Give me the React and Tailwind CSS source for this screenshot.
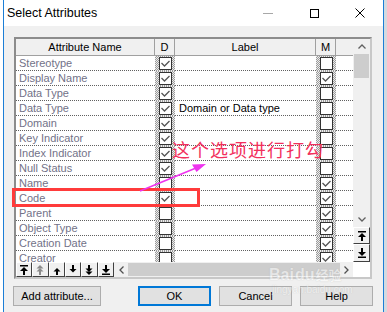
import React from "react";

const rows = [
  ["Stereotype", true, "", false],
  ["Display Name", true, "", true],
  ["Data Type", true, "", false],
  ["Data Type", true, "Domain or Data type", false],
  ["Domain", true, "", false],
  ["Key Indicator", true, "", false],
  ["Index Indicator", true, "", false],
  ["Null Status", true, "", false],
  ["Name", false, "", true],
  ["Code", true, "", true],
  ["Parent", false, "", true],
  ["Object Type", false, "", true],
  ["Creation Date", false, "", true],
  ["Creator", false, "", true],
];

function Check({ on }) {
  return (
    <div className="w-[13px] h-[13px] bg-white border border-[#333] flex items-center justify-center">
      {on && (
        <svg width="11" height="11" viewBox="0 0 11 11">
          <path d="M1.5 5 L4.5 8 L9.5 3" stroke="#555" strokeWidth="1.3" fill="none" />
        </svg>
      )}
    </div>
  );
}

function DotCell({ on }) {
  return (
    <div className="w-[20px] h-[15px] flex items-center justify-center bg-[repeating-conic-gradient(#9a9a9a_0_25%,#ececec_0_50%)] bg-size-[2px_2px]">
      <Check on={on} />
    </div>
  );
}

function ToolIcon({ kind }) {
  const c = kind === "up2" ? "#8a8a8a" : "#000";
  let body = null;
  if (kind === "top")
    body = (
      <>
        <rect x="1" y="0" width="8" height="1.5" fill={c} />
        <path d="M5 2 L1 6 L9 6 Z" fill={c} />
        <rect x="4" y="6" width="2" height="4" fill={c} />
      </>
    );
  if (kind === "up2")
    body = (
      <>
        <path d="M5 0 L1.5 3.5 L8.5 3.5 Z" fill={c} />
        <path d="M5 3 L1.5 6.5 L8.5 6.5 Z" fill={c} />
        <rect x="4" y="6" width="2" height="4" fill={c} />
      </>
    );
  if (kind === "up")
    body = (
      <>
        <path d="M5 3 L1.5 6.5 L8.5 6.5 Z" fill={c} />
        <rect x="4" y="6" width="2" height="4" fill={c} />
      </>
    );
  if (kind === "down")
    body = (
      <>
        <rect x="4" y="0" width="2" height="4" fill={c} />
        <path d="M5 7.5 L1.5 4 L8.5 4 Z" fill={c} />
      </>
    );
  if (kind === "down2")
    body = (
      <>
        <rect x="4" y="0" width="2" height="4" fill={c} />
        <path d="M5 7 L1.5 3.5 L8.5 3.5 Z" fill={c} />
        <path d="M5 10 L1.5 6.5 L8.5 6.5 Z" fill={c} />
      </>
    );
  if (kind === "bottom")
    body = (
      <>
        <rect x="4" y="0" width="2" height="4" fill={c} />
        <path d="M5 8 L1 4 L9 4 Z" fill={c} />
        <rect x="1" y="8.5" width="8" height="1.5" fill={c} />
      </>
    );
  return (
    <svg width="10" height="10" viewBox="0 0 10 10">
      {body}
    </svg>
  );
}

function ToolBtn({ kind }) {
  return (
    <div className="flex-1 h-[15px] bg-[#f0f0f0] border border-t-white border-l-white border-r-[#404040] border-b-[#404040] flex items-center justify-center">
      <ToolIcon kind={kind} />
    </div>
  );
}

function Btn({ children, w, focus, className = "" }) {
  return (
    <div
      className={
        "h-[20px] flex items-center justify-center text-[11px] text-black bg-[#e1e1e1] " +
        (focus ? "border-2 border-[#0078d7] " : "border border-[#adadad] ") +
        w +
        " " +
        className
      }
    >
      {children}
    </div>
  );
}

export default function App() {
  return (
    <div className="relative w-[387px] h-[312px] overflow-hidden bg-white flex font-['Liberation_Sans',Arial,sans-serif]">
      <div className="w-[3px] bg-white" />
      <div className="w-[381px] border-x border-[#1c7ed6] flex flex-col">
        {/* title bar */}
        <div className="h-[26px] bg-white flex items-center">
          <div className="pl-[3px] text-[12.5px] text-black">Select Attributes</div>
          <div className="flex-1" />
          <div className="w-[46px] h-[26px] flex items-center justify-center">
            <div className="w-[10px] h-px bg-[#a8a8a8]" />
          </div>
          <div className="w-[46px] h-[26px] flex items-center justify-center">
            <div className="w-[9px] h-[9px] border border-black" />
          </div>
          <div className="w-[46px] h-[26px] flex items-center justify-center">
            <svg width="10" height="10" viewBox="0 0 10 10">
              <path d="M0.5 0.5 L9.5 9.5 M9.5 0.5 L0.5 9.5" stroke="#000" strokeWidth="1" />
            </svg>
          </div>
        </div>

        {/* body */}
        <div className="flex-1 bg-[#f0f0f0] pt-[11px] pl-[9px] flex flex-col">
          {/* grid */}
          <div className="ml-[1px] w-[358px] h-[242px] border-2 border-t-[#8c8c8c] border-l-[#8c8c8c] border-r-[#c8c8c8] border-b-[#c8c8c8] bg-white flex flex-col text-[11px]">
            <div className="flex h-[223px]">
              <div className="w-[337px] flex flex-col">
                {/* header */}
                <div className="h-[17px] flex bg-[#f0f0f0] border-b border-[#a0a0a0] text-black">
                  <div className="w-[139px] border-r border-[#a0a0a0] flex items-center justify-center">Attribute Name</div>
                  <div className="w-[20px] border-r border-[#a0a0a0] flex items-center justify-center">D</div>
                  <div className="w-[141px] border-r border-[#a0a0a0] flex items-center justify-center">Label</div>
                  <div className="w-[20px] border-r border-[#a0a0a0] flex items-center justify-center">M</div>
                  <div className="flex-1" />
                </div>
                {/* rows */}
                <div className="h-[206px] overflow-hidden flex flex-col">
                  {rows.map(([name, d, label, m], i) => (
                    <div key={i} className="flex h-[15px] shrink-0">
                      <div className="w-[139px] h-[15px] border-b border-dotted border-[#606060] pl-[3px] flex items-center text-[#727288] whitespace-nowrap">
                        {name}
                      </div>
                      <DotCell on={d} />
                      <div className="w-[141px] h-[15px] border-b border-dotted border-[#606060] pl-[4px] flex items-center text-black whitespace-nowrap">
                        {label}
                      </div>
                      <DotCell on={m} />
                      <div className="flex-1 h-[15px] border-b border-dotted border-[#606060]" />
                    </div>
                  ))}
                </div>
              </div>
              {/* vertical scrollbar */}
              <div className="w-[17px] flex flex-col bg-[#f0f0f0]">
                <div className="h-[15px] flex items-center justify-center">
                  <svg width="8" height="5" viewBox="0 0 8 5">
                    <path d="M0.5 4.5 L4 1 L7.5 4.5" stroke="#606060" strokeWidth="1.3" fill="none" />
                  </svg>
                </div>
                <div className="h-[24px] mx-px bg-[#cdcdcd]" />
                <div className="h-[134px]" />
                <div className="h-[15px] flex items-center justify-center">
                  <svg width="8" height="5" viewBox="0 0 8 5">
                    <path d="M0.5 0.5 L4 4 L7.5 0.5" stroke="#606060" strokeWidth="1.3" fill="none" />
                  </svg>
                </div>
                <div className="h-[17px] border border-t-white border-l-white border-r-[#404040] border-b-[#404040] bg-[#f0f0f0] flex items-center justify-center">
                  <ToolIcon kind="top" />
                </div>
                <div className="h-[18px] border border-t-white border-l-white border-r-[#404040] border-b-[#404040] bg-[#f0f0f0] flex items-center justify-center">
                  <ToolIcon kind="bottom" />
                </div>
              </div>
            </div>
            {/* bottom strip */}
            <div className="flex h-[15px]">
              <div className="w-[98px] flex">
                <ToolBtn kind="top" />
                <ToolBtn kind="up2" />
                <ToolBtn kind="up" />
                <ToolBtn kind="down" />
                <ToolBtn kind="down2" />
                <ToolBtn kind="bottom" />
              </div>
              <div className="w-[239px] flex bg-[#f0f0f0]">
                <div className="w-[14px] flex items-center justify-center">
                  <svg width="5" height="8" viewBox="0 0 5 8">
                    <path d="M4.5 0.5 L1 4 L4.5 7.5" stroke="#505050" strokeWidth="1.3" fill="none" />
                  </svg>
                </div>
                <div className="w-[212px] my-px bg-[#cdcdcd]" />
                <div className="flex-1 flex items-center justify-center">
                  <svg width="5" height="8" viewBox="0 0 5 8">
                    <path d="M0.5 0.5 L4 4 L0.5 7.5" stroke="#505050" strokeWidth="1.3" fill="none" />
                  </svg>
                </div>
              </div>
              <div className="flex-1 bg-white" />
            </div>
          </div>

          {/* buttons */}
          <div className="flex mt-[7px]">
            <Btn w="w-[88px]">Add attribute...</Btn>
            <Btn w="w-[73px]" focus className="ml-[37px]">OK</Btn>
            <Btn w="w-[73px]" className="ml-[8px]">Cancel</Btn>
            <Btn w="w-[73px]" className="ml-[8px]">Help</Btn>
          </div>
        </div>
      </div>
      <div className="w-[3px] bg-[#d4dae0]" />

      {/* annotations */}
      <div className="absolute left-[12px] top-[188px] w-[188px] h-[19px] border-[3px] border-[#ff3b3b]" />
      <div className="absolute left-[172px] top-[139px] text-[18px] leading-[20px] tracking-[1px] text-[#f2305c] font-['Noto_Sans_CJK_SC',sans-serif] whitespace-nowrap">
        这个选项进行打勾
      </div>
      <svg className="absolute left-0 top-0" width="387" height="312" viewBox="0 0 387 312">
        <path d="M140 191 L196 168" stroke="#ee33ee" strokeWidth="1.6" fill="none" />
        <path d="M206 164 L192 164.5 L196.5 172 Z" fill="#ee33ee" />
      </svg>

      {/* watermark */}
      <div className="absolute left-[269px] top-[266px] flex flex-col items-start opacity-50 pointer-events-none">
        <div className="flex items-end text-[16px] leading-[18px] font-bold text-white [text-shadow:0_0_1px_#a0a0a0]">
          <span>Bai</span>
          <span className="ml-[1px]">du</span>
          <span className="ml-[1px] text-[13px] font-['Noto_Sans_CJK_SC',sans-serif]">经验</span>
        </div>
        <div className="text-[10px] leading-[11px] text-white [text-shadow:0_0_1px_#a0a0a0] ml-[3px]">jingyan.baidu.com</div>
      </div>
    </div>
  );
}
